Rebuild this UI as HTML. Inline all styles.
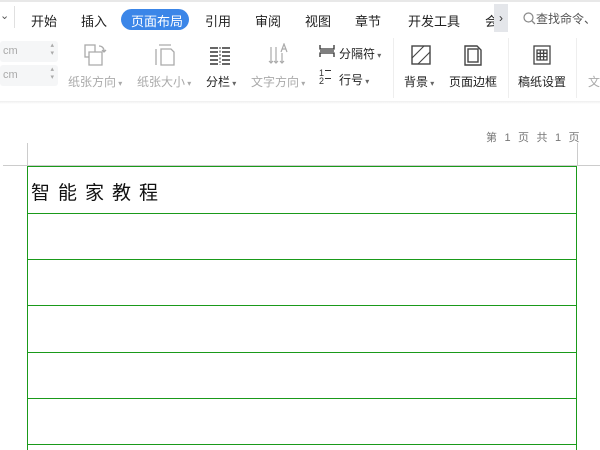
<!DOCTYPE html>
<html><head><meta charset="utf-8"><style>
*{margin:0;padding:0;box-sizing:border-box}
body{width:600px;height:450px;overflow:hidden;background:#fff;font-family:"Liberation Sans","Noto Sans CJK SC",sans-serif;position:relative}
.a{position:absolute;white-space:nowrap}
.tab{font-size:13px;color:#222;top:11px}
.lbl{font-size:12px;color:#222}
.g{color:#aaa}
.gl{position:absolute;background:#1a9a1a}
</style></head><body>
<div class="a" style="left:0;top:0;width:600px;height:2px;background:#e8e8e8"></div>
<div class="a" style="left:0;top:9px;font-size:11px;color:#555">⌄</div>
<div class="a" style="left:14px;top:6px;width:1px;height:22px;background:#e0e0e0"></div>
<div class="a tab" style="left:31px">开始</div>
<div class="a tab" style="left:81px">插入</div>
<div class="a" style="left:121px;top:9px;width:68px;height:21px;border-radius:11px;background:#3b86e8"></div>
<div class="a tab" style="left:131px;color:#fff">页面布局</div>
<div class="a tab" style="left:205px">引用</div>
<div class="a tab" style="left:255px">审阅</div>
<div class="a tab" style="left:305px">视图</div>
<div class="a tab" style="left:355px">章节</div>
<div class="a tab" style="left:408px">开发工具</div>
<div class="a tab" style="left:485px;width:9px;overflow:hidden">会</div>
<div class="a" style="left:494px;top:4px;width:14px;height:28px;background:#e4e6ea;font-size:12px;text-align:center;line-height:28px;color:#333">›</div>
<div class="a" style="left:523px;top:10px;font-size:12px;color:#555">
<svg width="13" height="13" viewBox="0 0 13 13" style="vertical-align:-2px"><circle cx="5.5" cy="5.5" r="4.5" fill="none" stroke="#888" stroke-width="1.2"/><path d="M9 9l3 3" stroke="#888" stroke-width="1.3"/></svg>查找命令、</div>
<div class="a" style="left:0;top:41px;width:58px;height:21px;background:#f5f6f7;border-radius:3px;font-size:11px;color:#aaa;padding:4px 3px">cm<span style="position:absolute;right:4px;top:1px;font-size:7px;line-height:8px">▴<br>▾</span></div>
<div class="a" style="left:0;top:65px;width:58px;height:21px;background:#f5f6f7;border-radius:3px;font-size:11px;color:#aaa;padding:4px 3px">cm<span style="position:absolute;right:4px;top:1px;font-size:7px;line-height:8px">▴<br>▾</span></div>
<svg class="a" style="left:82px;top:43px" width="28" height="24" viewBox="0 0 28 24" fill="none" stroke="#aaa" stroke-width="1.3"><rect x="3" y="2" width="10" height="12"/><path d="M7 9h13v13H7z" fill="#fff"/><path d="M17 3c3 0 5 2 5 5M20 7l2 2 2-2"/></svg>
<svg class="a" style="left:153px;top:43px" width="24" height="24" viewBox="0 0 24 24" fill="none" stroke="#aaa" stroke-width="1.3"><path d="M6 2h12M3 6v16M8 6h10l3 3v13H8z"/></svg>
<svg class="a" style="left:208px;top:46px" width="24" height="20" viewBox="0 0 24 20" stroke="#333" stroke-width="1.4"><path d="M2 2h8M2 6h8M2 10h8M2 14h8M2 18h8M14 2h8M14 6h8M14 10h8M14 14h8M14 18h8"/><path d="M12 1v18" stroke-dasharray="2 1.5" stroke-width="1"/></svg>
<svg class="a" style="left:268px;top:43px" width="24" height="24" viewBox="0 0 24 24" fill="none" stroke="#aaa" stroke-width="1.2"><path d="M3 4v16M1 18l2 2 2-2M8 4v16M6 18l2 2 2-2M14 10v10M12 18l2 2 2-2M13 9l3-8 3 8M14 6h4"/></svg>
<svg class="a" style="left:319px;top:44px" width="16" height="14" viewBox="0 0 16 14" fill="none" stroke="#333" stroke-width="1.3"><path d="M1 1v4h14V1M1 13V9h14v4M1 7h14" /></svg>
<div class="a lbl" style="left:339px;top:45px">分隔符<span style="font-size:8px;color:#666"> ▾</span></div>
<div class="a" style="left:319px;top:69px;font-size:9px;line-height:8px;color:#333">1<br>2</div>
<div class="a" style="left:325px;top:70px;width:6px;height:1px;background:#333"></div>
<div class="a" style="left:325px;top:78px;width:6px;height:1px;background:#333"></div>
<div class="a lbl" style="left:339px;top:71px">行号<span style="font-size:8px;color:#666"> ▾</span></div>
<div class="a" style="left:393px;top:38px;width:1px;height:60px;background:#eee"></div>
<svg class="a" style="left:410px;top:44px" width="22" height="22" viewBox="0 0 22 22" fill="none" stroke="#444" stroke-width="1.4"><rect x="2" y="2" width="18" height="18"/><path d="M2 14L14 2M8 20L20 8" stroke-width="1.1"/></svg>
<svg class="a" style="left:463px;top:44px" width="20" height="22" viewBox="0 0 20 22" fill="none" stroke="#444" stroke-width="1.4"><path d="M2 2h12l4 4v15H2z"/><rect x="5" y="5" width="10" height="13"/></svg>
<div class="a" style="left:508px;top:38px;width:1px;height:60px;background:#eee"></div>
<svg class="a" style="left:532px;top:44px" width="20" height="22" viewBox="0 0 20 22" fill="none" stroke="#444" stroke-width="1.3"><rect x="2" y="2" width="16" height="18"/><path d="M5 6h10v10H5zM5 9.3h10M5 12.6h10M8.3 6v10M11.6 6v10"/></svg>
<div class="a" style="left:576px;top:38px;width:1px;height:60px;background:#eee"></div>
<div class="a lbl g" style="left:68px;top:73px">纸张方向<span style="font-size:8px"> ▾</span></div>
<div class="a lbl g" style="left:137px;top:73px">纸张大小<span style="font-size:8px"> ▾</span></div>
<div class="a lbl" style="left:206px;top:73px">分栏<span style="font-size:8px;color:#666"> ▾</span></div>
<div class="a lbl g" style="left:251px;top:73px">文字方向<span style="font-size:8px"> ▾</span></div>
<div class="a lbl" style="left:404px;top:73px">背景<span style="font-size:8px;color:#666"> ▾</span></div>
<div class="a lbl" style="left:449px;top:73px">页面边框</div>
<div class="a lbl" style="left:518px;top:73px">稿纸设置</div>
<div class="a lbl g" style="left:588px;top:73px">文</div>
<div class="a" style="left:0;top:101px;width:600px;height:3px;background:linear-gradient(#eee,#fff)"></div>
<div class="a" style="left:486px;top:129px;font-size:11px;color:#777;letter-spacing:2.2px">第 1 页 共 1 页</div>
<div class="a" style="left:27px;top:143px;width:1px;height:23px;background:#ccc"></div>
<div class="a" style="left:577px;top:143px;width:1px;height:23px;background:#ccc"></div>
<div class="a" style="left:3px;top:165px;width:597px;height:1px;background:#ccc"></div>
<div class="gl" style="left:27px;top:166px;width:1px;height:284px"></div>
<div class="gl" style="left:576px;top:166px;width:1px;height:284px"></div>
<div class="gl" style="left:27px;top:166px;width:550px;height:1px"></div>
<div class="gl" style="left:27px;top:213px;width:550px;height:1px"></div>
<div class="gl" style="left:27px;top:259px;width:550px;height:1px"></div>
<div class="gl" style="left:27px;top:305px;width:550px;height:1px"></div>
<div class="gl" style="left:27px;top:352px;width:550px;height:1px"></div>
<div class="gl" style="left:27px;top:398px;width:550px;height:1px"></div>
<div class="gl" style="left:27px;top:444px;width:550px;height:1px"></div>
<div class="a" style="left:31px;top:178px;font-size:19px;color:#111;letter-spacing:8px">智能家教程</div>
</body></html>
